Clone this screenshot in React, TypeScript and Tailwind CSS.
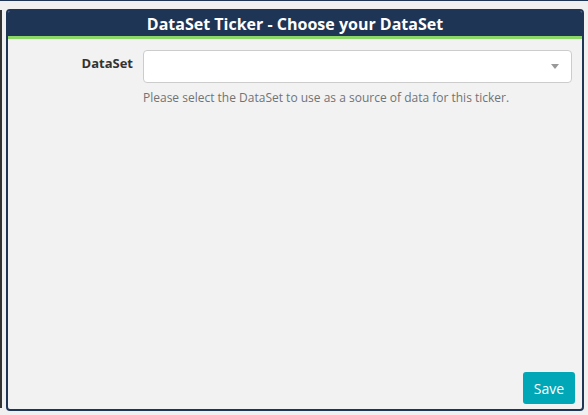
import React from 'react';

const App: React.FC = () => {
  return (
    <div className="w-[588px] h-[415px] bg-[#f0f0f0] overflow-hidden flex flex-col" style={{ fontFamily: '"Open Sans", "Noto Sans", sans-serif' }}>
      <div className="h-px bg-[#1f3556] shrink-0" />
      <div className="flex mt-[8px]">
        <div className="w-[2px] mt-[1px] h-[398px] bg-[#333333] shrink-0" />
        <div className="ml-[4px] w-[578px] h-[402px] border-2 border-[#1f3556] rounded-[4px] overflow-hidden bg-[#f2f2f2] flex flex-col">
          <div className="h-[25px] bg-[#1f3556] flex items-center justify-center text-white font-bold text-[16px] leading-none shrink-0">
            DataSet Ticker - Choose your DataSet
          </div>
          <div className="h-[3px] bg-[#8cd867] shrink-0" />
          <div className="flex-1 flex flex-col pl-0 pr-[10px] pt-[11px] pb-[5px]">
            <div className="flex">
              <label className="w-[125px] shrink-0 text-right text-[13px] font-bold text-[#333333] pt-[3px] leading-[20px]">
                DataSet
              </label>
              <div className="ml-[10px] flex-1 flex flex-col">
                <div className="h-[33px] bg-white border border-[#cccccc] rounded-[4px] flex items-center justify-end pr-[12px]">
                  <span className="w-0 h-0 border-l-[4px] border-r-[4px] border-t-[5px] border-l-transparent border-r-transparent border-t-[#999999]" />
                </div>
                <p className="mt-[6px] text-[12px] leading-[17px] text-[#737373]">
                  Please select the DataSet to use as a source of data for this ticker.
                </p>
              </div>
            </div>
            <div className="mt-auto flex justify-end -mr-[3px]">
              <button className="w-[52px] h-[32px] rounded-[3px] bg-[#00a7b7] text-white text-[14px]">Save</button>
            </div>
          </div>
        </div>
      </div>
    </div>
  );
};

export default App;
